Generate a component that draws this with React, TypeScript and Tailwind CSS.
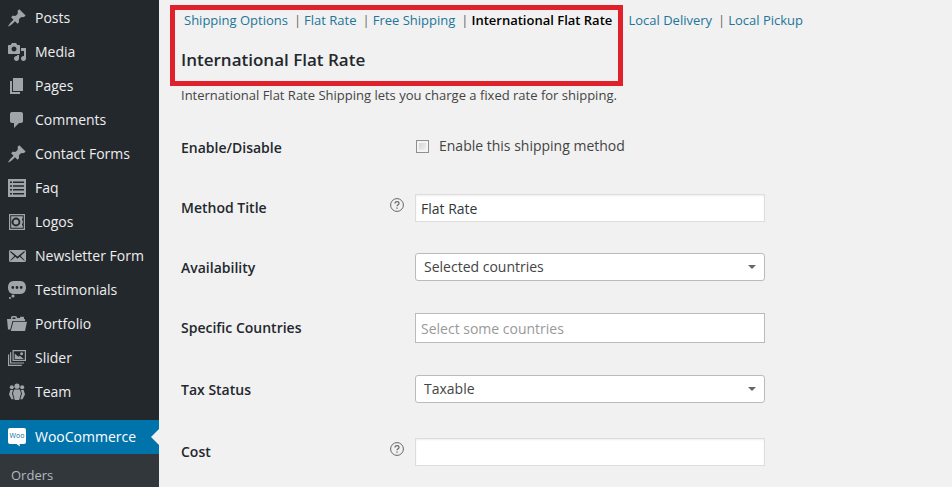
import React from 'react';
import { clsx } from 'clsx';

const icons: Record<string, React.ReactNode> = {
  pin: (
    <path d="M10.44 3.02l1.82-1.82 6.36 6.35-1.83 1.82c-1.05-.68-2.48-.57-3.41.36l-.75.75c-.92.93-1.04 2.35-.35 3.41l-1.83 1.82-2.41-2.41-2.8 2.79c-.42.42-3.38 2.71-3.8 2.29s1.86-3.39 2.28-3.81l2.79-2.79L4.1 9.36l1.83-1.82c1.05.69 2.48.57 3.4-.36l.75-.75c.93-.92 1.05-2.35.36-3.41z" />
  ),
  media: (
    <path d="M13 11V4c0-.55-.45-1-1-1h-1.67L9 1H5L3.67 3H2c-.55 0-1 .45-1 1v7c0 .55.45 1 1 1h10c.55 0 1-.45 1-1zM7 4.5c1.38 0 2.5 1.12 2.5 2.5S8.38 9.5 7 9.5 4.5 8.38 4.5 7 5.62 4.5 7 4.5zM14 6h5v10.5c0 1.38-1.12 2.5-2.5 2.5S14 17.88 14 16.5s1.12-2.5 2.5-2.5c.17 0 .34.02.5.05V9h-3V6zm-4 8.05V13h2v3.5c0 1.38-1.12 2.5-2.5 2.5S7 17.88 7 16.5 8.12 14 9.5 14c.17 0 .34.02.5.05z" />
  ),
  page: <path d="M6 15V2h10v13H6zm-1 1h8v2H3V5h2v11z" />,
  comment: (
    <path d="M5 2h9c1.1 0 2 .9 2 2v7c0 1.1-.9 2-2 2h-2l-5 5v-5H5c-1.1 0-2-.9-2-2V4c0-1.1.9-2 2-2z" />
  ),
  list: (
    <path
      fillRule="evenodd"
      d="M1 1h18v18H1zM3 3.5v1.5h2v-1.5zM6 3.5v1.5h11v-1.5zM3 7.3v1.5h2v-1.5zM6 7.3v1.5h11v-1.5zM3 11.1v1.5h2v-1.5zM6 11.1v1.5h11v-1.5zM3 14.9v1.5h2v-1.5zM6 14.9v1.5h11v-1.5z"
    />
  ),
  vault: (
    <>
      <path fillRule="evenodd" d="M2 2h16v16H2zM3.2 3.2v13.6h13.6V3.2z" />
      <path
        fillRule="evenodd"
        d="M4.2 4.2h11.6v2.3h-.8v2h.8v3h-.8v2h.8v2.3H4.2zM9 5.6a4.4 4.4 0 1 0 0 8.8 4.4 4.4 0 0 0 0-8.8zM9 7.5a2.5 2.5 0 1 1 0 5 2.5 2.5 0 0 1 0-5z"
      />
    </>
  ),
  email: (
    <path d="M19 14.5v-9c0-.83-.67-1.5-1.5-1.5H3.49c-.83 0-1.5.67-1.5 1.5v9c0 .83.67 1.5 1.5 1.5H17.5c.83 0 1.5-.67 1.5-1.5zm-1.31-9.11c.33.33.15.67-.03.84L13.6 9.95l3.9 4.06c.12.14.2.36.06.51-.13.16-.43.15-.56.05l-4.37-3.73-2.14 1.95-2.13-1.95-4.37 3.73c-.13.1-.43.11-.56-.05-.14-.15-.06-.37.06-.51l3.9-4.06-4.06-3.72c-.18-.17-.36-.51-.03-.84s.67-.17.95.07l6.24 5.04 6.25-5.04c.28-.24.62-.4.95-.07z" />
  ),
  bubble: (
    <>
      <path
        fillRule="evenodd"
        d="M6.5 1h7C16.8 1 19 3.8 19 7.5S16.8 14 13.5 14h-7C3.2 14 1 11.2 1 7.5S3.2 1 6.5 1zM5.8 6.1a1.4 1.4 0 1 0 0 2.8 1.4 1.4 0 0 0 0-2.8zM10 6.1a1.4 1.4 0 1 0 0 2.8 1.4 1.4 0 0 0 0-2.8zM14.2 6.1a1.4 1.4 0 1 0 0 2.8 1.4 1.4 0 0 0 0-2.8z"
      />
      <circle cx="6" cy="16" r="1.6" />
      <circle cx="3" cy="18" r="1.1" />
    </>
  ),
  folder: (
    <>
      <path
        fillRule="evenodd"
        d="M4 5V3.8C4 2.8 4.7 2 5.7 2h2.6c1 0 1.7.8 1.7 1.8V4h3v-.2c0-.6.5-1 1-1h2c.6 0 1 .4 1 1V5h1v2H5.5L3.3 15.5H1L0 5zM5.500 5h3V3.500h-3z"
      />
      <path d="M6.3 7.8H20L18 17H3.8z" />
    </>
  ),
  gallery: (
    <>
      <path
        fillRule="evenodd"
        d="M5.5 2H19v11H5.5zM6.7 3.2v8.6h11.1V3.2zM3 4.2h1.2v10.2H17v1.2H3zM1 6.4h1.2v10.4h12.6V18H1z"
      />
      <path d="M7.7 10.9V5.5l3.6 3.3 1.5-1 4 3.1z" />
      <circle cx="14.6" cy="5.8" r="1.5" />
    </>
  ),
  groups: (
    <>
      <circle cx="4.8" cy="5.3" r="2" />
      <circle cx="10" cy="4.2" r="2.6" />
      <circle cx="15.2" cy="5.3" r="2" />
      <path d="M7.1 7.6h5.8l1.1 4-1.8 6.4H7.8L6 11.6z" />
      <path d="M3.3 8h2.8L5 11.6l1.7 5.6H4.5L2 12.5z" />
      <path d="M16.7 8h-2.8l1.1 3.6-1.7 5.6h2.2l2.5-4.7z" />
    </>
  ),
};

const menu = [
  { label: 'Posts', icon: 'pin' },
  { label: 'Media', icon: 'media' },
  { label: 'Pages', icon: 'page' },
  { label: 'Comments', icon: 'comment' },
  { label: 'Contact Forms', icon: 'pin' },
  { label: 'Faq', icon: 'list' },
  { label: 'Logos', icon: 'vault' },
  { label: 'Newsletter Form', icon: 'email' },
  { label: 'Testimonials', icon: 'bubble' },
  { label: 'Portfolio', icon: 'folder' },
  { label: 'Slider', icon: 'gallery' },
  { label: 'Team', icon: 'groups' },
];

const sections = [
  'Shipping Options',
  'Flat Rate',
  'Free Shipping',
  'International Flat Rate',
  'Local Delivery',
  'Local Pickup',
];

const WooIcon = () => (
  <svg viewBox="0 0 20 20" className="size-5 shrink-0" aria-hidden="true">
    <path
      fill="#fff"
      d="M3 1h14a2 2 0 0 1 2 2v12a2 2 0 0 1-2 2h-4.5l.5 2.5L9.5 17H3a2 2 0 0 1-2-2V3a2 2 0 0 1 2-2z"
    />
    <text x="10" y="11" textAnchor="middle" fontSize="7" fontWeight="500" fill="#0073aa">
      Woo
    </text>
  </svg>
);

const HelpTip = () => (
  <svg viewBox="0 0 14 14" className="size-3.5 overflow-visible" fill="none" stroke="#666" role="img" aria-label="Help">
    <circle cx="7" cy="7" r="6.4" />
    <path d="M5 5.6C5 4.4 5.9 3.7 7 3.7s2 .7 2 1.7c0 1.3-2 1.4-2 2.9" strokeWidth="1.2" />
    <path d="M7 9.4v1.3" strokeWidth="1.3" />
  </svg>
);

const Sidebar = () => (
  <nav className="flex w-[159px] shrink-0 flex-col bg-[#23282d] pt-px text-sm text-[#eee]" aria-label="Admin menu">
    <ul>
      {menu.map((item) => (
        <li key={item.label}>
          <a href="#" className="flex h-[34px] items-center gap-2 pl-[7px] whitespace-nowrap">
            <svg viewBox="0 0 20 20" className="size-5 shrink-0 fill-[#a0a5aa]" aria-hidden="true">
              {icons[item.icon]}
            </svg>
            {item.label}
          </a>
        </li>
      ))}
    </ul>
    <a href="#" className="relative mt-[11px] flex h-[34px] items-center gap-2 bg-[#0073aa] pl-[7px] text-white">
      <WooIcon />
      WooCommerce
      <span className="absolute top-[9px] right-0 border-y-8 border-r-8 border-y-transparent border-r-[#f1f1f1]" />
    </a>
    <div className="grow bg-[#32373c] px-[11px] pt-3">
      <a href="#" className="block text-[13px] leading-[18px] text-[#b4b9be]">
        Orders
      </a>
    </div>
  </nav>
);

type RowProps = {
  id: string;
  label: string;
  help?: boolean;
  tall?: boolean;
  children: React.ReactNode;
};

const Row = ({ id, label, help, tall, children }: RowProps) => (
  <div className={clsx('flex items-center', tall ? 'h-16' : 'h-15')}>
    <div className="flex w-[234px] shrink-0 items-center justify-between pr-[11px]">
      <label htmlFor={id} className="text-sm font-semibold text-[#23282d]">
        {label}
      </label>
      {help && (
        <span className="pb-1.5">
          <HelpTip />
        </span>
      )}
    </div>
    <div className="max-w-[350px] grow">{children}</div>
  </div>
);

const Select = ({ id, option }: { id: string; option: string }) => (
  <div className="relative pb-0.5">
    <select
      id={id}
      className="block h-7 w-full appearance-none rounded-[3px] border border-[#bbb] bg-white px-2 text-sm leading-5 text-[#444]"
    >
      <option>{option}</option>
    </select>
    <span className="pointer-events-none absolute top-3 right-[9px] border-x-4 border-t-4 border-x-transparent border-t-[#666]" />
  </div>
);

const textInput = 'block h-7 w-full border border-[#ddd] bg-white px-[5px] text-sm text-[#32373c] shadow-[inset_0_1px_2px_rgba(0,0,0,0.07)]';

const App: React.FC = () => {
  return (
    <div className="flex min-h-screen bg-[#f1f1f1] font-['Open_Sans',sans-serif] text-[#444]">
      <Sidebar />
      <main className="min-w-0 grow px-[22px] pt-[11px]">
        <div className="relative">
          <ul className="flex pl-[3px] text-[13px] leading-[18px] whitespace-nowrap text-[#666]">
            {sections.map((name, i) => (
              <li key={name}>
                <a
                  href="#"
                  className={clsx(name === 'International Flat Rate' ? 'font-semibold text-black' : 'text-[#21759b]')}
                >
                  {name}
                </a>
                {i < sections.length - 1 && <span className="pr-[3px] pl-1.5">|</span>}
              </li>
            ))}
          </ul>
          <h1 className="mt-[19px] text-[17px] leading-6 font-semibold text-[#23282d]">International Flat Rate</h1>
          {/* highlight around the active section */}
          <div className="pointer-events-none absolute -top-1.5 -left-[11px] h-[81px] w-[453px] border-5 border-[#e0202a]" />
        </div>
        <p className="mt-3.5 text-[13px] leading-[18px]">
          International Flat Rate Shipping lets you charge a fixed rate for shipping.
        </p>
        <form className="mt-3.5">
          <Row id="enabled" label="Enable/Disable">
            <div className="flex items-center gap-2.5 pb-1 pl-px">
              <input
                id="enabled"
                type="checkbox"
                className="size-[13px] appearance-none border border-[#8e8f8f] bg-linear-to-br from-[#cbcfd5] to-[#f6f6f6] shadow-[inset_0_0_0_2px_#f4f4f4] checked:bg-[#0073aa]"
              />
              <label htmlFor="enabled" className="text-sm">
                Enable this shipping method
              </label>
            </div>
          </Row>
          <Row id="title" label="Method Title" help>
            <input id="title" type="text" defaultValue="Flat Rate" className={textInput} />
          </Row>
          <Row id="availability" label="Availability">
            <Select id="availability" option="Selected countries" />
          </Row>
          <Row id="countries" label="Specific Countries">
            <input
              id="countries"
              type="text"
              placeholder="Select some countries"
              className="block h-[30px] w-full border border-[#bbb] bg-white px-[5px] text-sm placeholder:text-[#999]"
            />
          </Row>
          <Row id="tax" label="Tax Status" tall>
            <Select id="tax" option="Taxable" />
          </Row>
          <Row id="cost" label="Cost" help>
            <input id="cost" type="text" className={textInput} />
          </Row>
        </form>
      </main>
    </div>
  );
};

export default App;
